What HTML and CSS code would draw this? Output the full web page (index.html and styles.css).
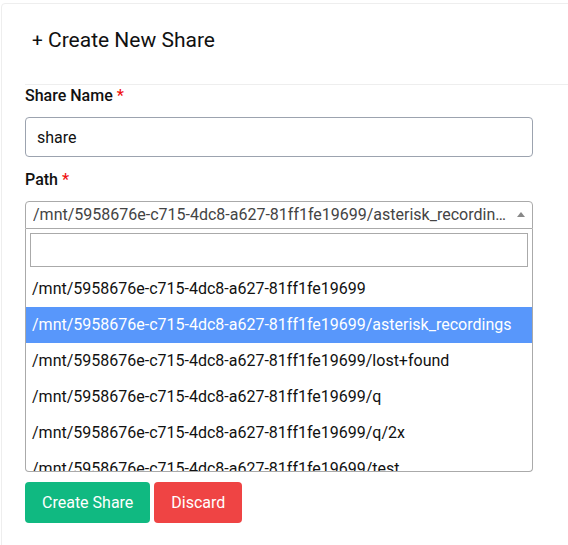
FILE: index.html
```html
<!DOCTYPE html>
<html lang="en">
<head>
<meta charset="utf-8">
<title>Create New Share</title>
<link rel="stylesheet" href="styles.css">
</head>
<body>
<div class="card">
  <div class="card-body">
    <div class="card-header">
      <h2 class="title"><span class="plus">+</span> Create New Share</h2>
    </div>
    <form class="form">
      <label class="label">Share Name <span class="req">*</span></label>
      <input class="text-input" type="text" value="share">
      <label class="label">Path <span class="req">*</span></label>
      <div class="select2">
        <div class="selection">
          <span class="selection-text">/mnt/5958676e-c715-4dc8-a627-81ff1fe19699/asterisk_recordings</span>
          <span class="arrow"><b></b></span>
        </div>
        <div class="dropdown">
          <div class="search"><input class="search-field" type="text"></div>
          <ul class="options">
            <li class="option">/mnt/5958676e-c715-4dc8-a627-81ff1fe19699</li>
            <li class="option highlighted">/mnt/5958676e-c715-4dc8-a627-81ff1fe19699/asterisk_recordings</li>
            <li class="option">/mnt/5958676e-c715-4dc8-a627-81ff1fe19699/lost+found</li>
            <li class="option">/mnt/5958676e-c715-4dc8-a627-81ff1fe19699/q</li>
            <li class="option">/mnt/5958676e-c715-4dc8-a627-81ff1fe19699/q/2x</li>
            <li class="option">/mnt/5958676e-c715-4dc8-a627-81ff1fe19699/test</li>
          </ul>
        </div>
      </div>
      <div class="actions">
        <button type="button" class="btn btn-create">Create Share</button>
        <button type="button" class="btn btn-discard">Discard</button>
      </div>
    </form>
  </div>
</div>
</body>
</html>
```
FILE: styles.css
```css
html, body {
  margin: 0;
  padding: 0;
  overflow: hidden;
  background: #ffffff;
}
body {
  font-family: Roboto, "Liberation Sans", sans-serif;
  color: #111111;
  padding: 3px 0 0 1px;
}
.card {
  width: 640px;
  height: 600px;
  border: 1px solid #eeeeee;
  border-radius: 4px;
  box-sizing: border-box;
}
.card-body {
  padding-left: 23px;
}
.card-header {
  padding: 22px 0 29px 7px;
  border-bottom: 1px solid #eeeeee;
}
.title {
  margin: 0;
  font-size: 21px;
  line-height: 28px;
  font-weight: 400;
  color: #111;
}
.plus {
  font-size: 19px;
}
.form {
  display: flex;
  flex-direction: column;
  align-items: flex-start;
  width: 508px;
}
.label {
  font-size: 16px;
  line-height: 22px;
  font-weight: 500;
  margin-bottom: 10px;
  color: #111;
}
.req {
  color: #ef1111;
}
.text-input {
  box-sizing: border-box;
  width: 508px;
  height: 40px;
  border: 1px solid #9ca3af;
  border-radius: 4px;
  padding: 0 11px;
  font-family: inherit;
  font-size: 16px;
  color: #111;
  margin: 0 0 12px;
  outline: none;
}
.select2 {
  width: 508px;
  position: relative;
}
.selection {
  position: relative;
  box-sizing: border-box;
  height: 28px;
  border: 1px solid #aaaaaa;
  border-radius: 4px 4px 0 0;
  padding: 0 26px 0 7px;
}
.selection-text {
  display: block;
  line-height: 26px;
  font-size: 16px;
  color: #444444;
  white-space: nowrap;
  overflow: hidden;
  text-overflow: ellipsis;
}
.arrow {
  position: absolute;
  top: 1px;
  right: 1px;
  width: 20px;
  height: 26px;
}
.arrow b {
  position: absolute;
  left: 50%;
  top: 50%;
  margin-left: -4px;
  margin-top: -4px;
  width: 0;
  height: 0;
  border-style: solid;
  border-width: 0 4px 5px 4px;
  border-color: transparent transparent #888888 transparent;
}
.dropdown {
  box-sizing: border-box;
  border: 1px solid #aaaaaa;
  border-top: none;
  border-radius: 0 0 4px 4px;
  background: #fff;
}
.search {
  padding: 4px;
}
.search-field {
  display: block;
  box-sizing: border-box;
  width: 100%;
  height: 34px;
  border: 1px solid #aaaaaa;
  padding: 4px;
  font-family: inherit;
  font-size: 16px;
  outline: none;
  margin: 0;
}
.options {
  list-style: none;
  margin: 0;
  padding: 0;
  max-height: 200px;
  overflow: hidden;
}
.option {
  padding: 6px 6px;
  font-size: 16px;
  line-height: 24px;
  color: #111;
  white-space: nowrap;
}
.option.highlighted {
  background: #5897fb;
  color: #ffffff;
}
.actions {
  display: flex;
  gap: 4px;
  margin-top: 10px;
}
.btn {
  border: none;
  border-radius: 4px;
  padding: 8px 17px;
  font-family: inherit;
  font-size: 16px;
  line-height: 25px;
  color: #ffffff;
  cursor: pointer;
}
.btn-create {
  background: #10b981;
}
.btn-discard {
  background: #ef4444;
}
```
